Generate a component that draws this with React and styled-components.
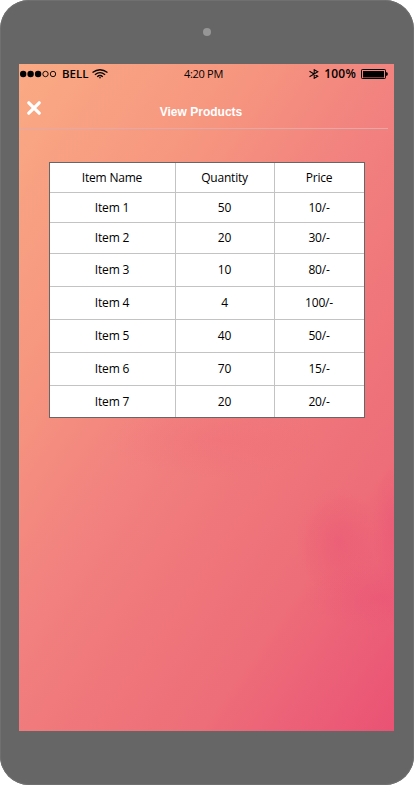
import React from "react";
import styled, { createGlobalStyle } from "styled-components";

const GlobalStyle = createGlobalStyle`
  * { box-sizing: border-box; }
  body { margin: 0; background: #fff; }
`;

const Device = styled.main`
  width: 414px;
  height: 785px;
  padding: 0 20px 54px 19px;
  display: flex;
  flex-direction: column;
  background: #666;
  border-radius: 29px;
  box-shadow: inset 0 0 0 1px #707070;
  font-family: "Open Sans", "Noto Sans", sans-serif;
`;

const Bezel = styled.div`
  height: 64px;
  flex: none;
  display: flex;
  justify-content: center;
  padding: 28px 0 0 1px;
`;

const Camera = styled.span`
  width: 8px;
  height: 8px;
  border-radius: 50%;
  background: #969696;
`;

const Screen = styled.section`
  flex: 1;
  display: flex;
  flex-direction: column;
  overflow: hidden;
  background:
    radial-gradient(ellipse 42px 54px at 319px 477px, rgba(233, 70, 116, 0.32), rgba(233, 70, 116, 0) 100%),
    radial-gradient(ellipse 26px 60px at 378px 462px, rgba(233, 70, 116, 0.32), rgba(233, 70, 116, 0) 100%),
    radial-gradient(ellipse 70px 32px at 355px 532px, rgba(233, 70, 116, 0.24), rgba(233, 70, 116, 0) 100%),
    radial-gradient(ellipse 105px 38px at 195px 376px, rgba(238, 90, 115, 0.18), rgba(238, 90, 115, 0) 100%),
    linear-gradient(125deg, #faaa84 0%, #f6957f 28%, #f2837f 45%, #f07a7c 57%, #ed6d78 77%, #ec6378 85%, #ea5274 100%);
`;

const StatusBar = styled.header`
  height: 19px;
  display: grid;
  grid-template-columns: 1fr auto 1fr;
  align-items: center;
  padding: 0 6px 0 1px;
  color: #000;
`;

const StatusGroup = styled.div`
  display: flex;
  align-items: center;
  justify-content: ${(p) => (p.$end ? "flex-end" : "flex-start")};
`;

const StatusText = styled.span`
  font-size: ${(p) => p.$size}px;
  font-weight: ${(p) => p.$weight || 400};
  letter-spacing: ${(p) => p.$spacing || 0}px;
  line-height: 18px;
  margin-left: ${(p) => p.$left || 0}px;
  margin-right: ${(p) => p.$right || 0}px;
`;

const TitleBar = styled.div`
  width: 369px;
  height: 46px;
  display: grid;
  grid-template-columns: 30px 1fr 35px;
  border-bottom: 1px solid #e2a9a9;
`;

const CloseButton = styled.button`
  width: 30px;
  height: 36px;
  padding: 18px 0 0 8px;
  border: 0;
  background: none;
  display: flex;
`;

const Title = styled.h1`
  margin: 21px 0 0;
  font: bold 12px/16px "Liberation Sans", Arial, sans-serif;
  color: #fff;
  text-align: center;
`;

const Table = styled.table`
  width: 316px;
  margin: 33px 0 0 30px;
  border: 1px solid #666;
  border-spacing: 0;
  table-layout: fixed;
  background: #fff;
`;

const Row = styled.tr`
  height: ${(p) => p.$height}px;
`;

const Cell = styled.td`
  width: ${(p) => p.$width}px;
  padding: 0 1px 0 0;
  border-right: 1px solid #c3c3c3;
  border-bottom: 1px solid #c3c3c3;
  text-align: center;
  vertical-align: middle;
  font-size: 12px;
  font-weight: 400;
  letter-spacing: -0.2px;
  line-height: 16px;
  color: #000;
  &:last-child { border-right: 0; }
  tbody ${Row}:last-child & { border-bottom: 0; }
`;

const SignalDots = () => (
  <svg width="37" height="8" viewBox="0 0 37 8">
    {[3.2, 10.6, 18.1].map((x) => <circle key={x} cx={x} cy="4" r="3.2" />)}
    {[25.5, 33].map((x) => (
      <circle key={x} cx={x} cy="4" r="2.7" fill="none" stroke="#000" strokeWidth="0.9" />
    ))}
  </svg>
);

const Wifi = () => (
  <svg width="16" height="10" viewBox="0 0 16 10" fill="none" stroke="#000" strokeWidth="1.3">
    <path d="M.5 3.5Q8-2 15.500 3.500" />
    <path d="M2.900 5.700Q8 1.500 13.100 5.700" />
    <path d="M5.200 7.700Q8 5.200 10.800 7.700" />
    <path d="M6.800 8.300H9.200L8 9.700Z" fill="#000" stroke="none" />
  </svg>
);

const Bluetooth = () => (
  <svg width="10" height="10" viewBox="0 0 10 10" fill="none" stroke="#000" strokeWidth="1.05">
    <path d="M.5 2.300 8.800 7.200 5.200 9.300V.7L8.800 2.800.5 7.700" />
  </svg>
);

const Battery = () => (
  <svg width="27" height="10" viewBox="0 0 27 10">
    <rect x=".5" y=".5" width="24" height="9" rx=".8" fill="none" stroke="#000" />
    <rect x="2" y="2" width="21" height="6.500" />
    <path d="M25 3.200h.8q1 0 1 1.800t-1 1.800H25z" />
  </svg>
);

const CloseIcon = () => (
  <svg width="14" height="14" viewBox="0 0 14 14" stroke="#fff" strokeWidth="3.2" strokeLinecap="round">
    <path d="M1.800 1.800 12.200 12.200M12.200 1.800 1.800 12.200" />
  </svg>
);

const columns = [126, 99, 89];
const header = ["Item Name", "Quantity", "Price"];
const rows = [
  { height: 30, cells: ["Item 1", "50", "10/-"] },
  { height: 31, cells: ["Item 2", "20", "30/-"] },
  { height: 33, cells: ["Item 3", "10", "80/-"] },
  { height: 33, cells: ["Item 4", "4", "100/-"] },
  { height: 33, cells: ["Item 5", "40", "50/-"] },
  { height: 33, cells: ["Item 6", "70", "15/-"] },
  { height: 31, cells: ["Item 7", "20", "20/-"] },
];

export default function App() {
  return (
    <>
      <GlobalStyle />
      <Device>
        <Bezel><Camera /></Bezel>
        <Screen>
          <StatusBar>
            <StatusGroup>
              <SignalDots />
              <StatusText $size={11.5} $weight={600} $left={5} $right={3}>BELL</StatusText>
              <Wifi />
            </StatusGroup>
            <StatusText $size={11} $spacing={-0.3} $right={1}>4:20 PM</StatusText>
            <StatusGroup $end>
              <Bluetooth />
              <StatusText $size={12} $weight={600} $spacing={0.2} $left={5} $right={5}>100%</StatusText>
              <Battery />
            </StatusGroup>
          </StatusBar>
          <TitleBar>
            <CloseButton aria-label="Close"><CloseIcon /></CloseButton>
            <Title>View Products</Title>
          </TitleBar>
          <Table>
            <thead>
              <Row $height={30}>
                {header.map((text, i) => (
                  <Cell as="th" key={text} $width={columns[i]}>{text}</Cell>
                ))}
              </Row>
            </thead>
            <tbody>
              {rows.map((row) => (
                <Row key={row.cells[0]} $height={row.height}>
                  {row.cells.map((text, i) => (
                    <Cell key={i} $width={columns[i]}>{text}</Cell>
                  ))}
                </Row>
              ))}
            </tbody>
          </Table>
        </Screen>
      </Device>
    </>
  );
}
